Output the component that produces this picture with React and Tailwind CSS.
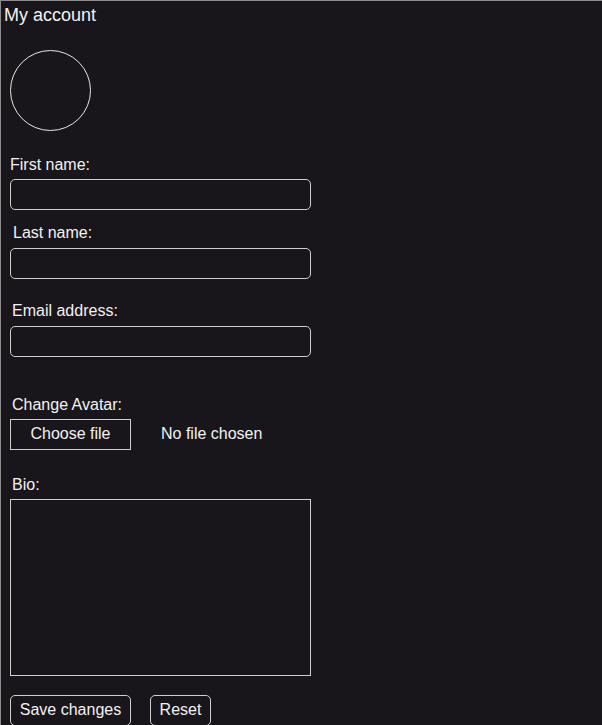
import React from 'react';

const Label = ({ children, className = '' }) => (
  <label className={`text-[16px] leading-[18px] ${className}`}>{children}</label>
);

const TextField = ({ className = '' }) => (
  <input
    type="text"
    className={`ml-[9px] w-[301px] h-[31px] rounded-[5px] border border-[#cfcfcf] bg-transparent px-2 text-[16px] outline-none ${className}`}
  />
);

const App = () => (
  <div className="min-h-screen overflow-hidden bg-[#18161b] border-t border-l border-[#8c8c8c] text-[#f2f2f2] font-['Liberation_Sans',Arial,sans-serif]">
    <div className="flex flex-col items-start">
      <h1 className="ml-[3px] mt-[4px] text-[18px] leading-[20px] font-normal">My account</h1>

      <div className="ml-[9px] mt-[25px] w-[81px] h-[81px] rounded-full border border-[#e6e6e6]" />

      <Label className="ml-[9px] mt-[25px]">First name:</Label>
      <TextField className="mt-[5px]" />

      <Label className="ml-[12px] mt-[14px]">Last name:</Label>
      <TextField className="mt-[6px]" />

      <Label className="ml-[11px] mt-[23px]">Email address:</Label>
      <TextField className="mt-[6px]" />

      <Label className="ml-[11px] mt-[39px]">Change Avatar:</Label>
      <div className="ml-[9px] mt-[5px] flex items-center">
        <button className="w-[121px] h-[31px] border border-[#cfcfcf] text-[16px] leading-[18px] pb-[2px]">
          Choose file
        </button>
        <span className="ml-[30px] text-[16px] leading-[18px] pb-[2px]">No file chosen</span>
      </div>

      <Label className="ml-[11px] mt-[26px]">Bio:</Label>
      <textarea className="ml-[9px] mt-[5px] w-[301px] h-[177px] border border-[#cfcfcf] bg-transparent resize-none outline-none" />

      <div className="ml-[9px] mt-[19px] flex gap-[19px]">
        <button className="w-[121px] h-[31px] rounded-[5px] border border-[#cfcfcf] text-[16px] leading-[18px] pb-[2px]">
          Save changes
        </button>
        <button className="w-[61px] h-[31px] rounded-[5px] border border-[#cfcfcf] text-[16px] leading-[18px] pb-[2px]">
          Reset
        </button>
      </div>
    </div>
  </div>
);

export default App;
